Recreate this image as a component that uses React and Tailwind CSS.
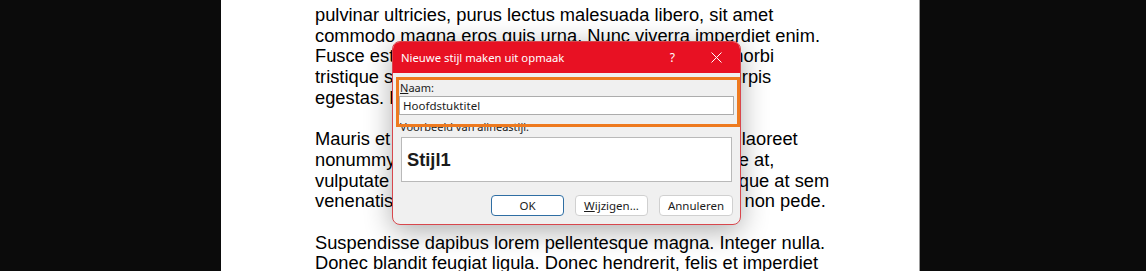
import React from 'react';

const lines = [
  ['pulvinar ultricies, purus lectus malesuada libero, sit amet',
   'commodo magna eros quis urna. Nunc viverra imperdiet enim.',
   'Fusce est. Vivamus a tellus. Pellentesque habitant morbi',
   'tristique senectus et netus et malesuada fames ac turpis',
   'egestas. Proin pharetra nonummy pede.'],
  ['Mauris et orci. Aenean nec lorem. In porttitor. Donec laoreet',
   'nonummy augue. Suspendisse dui purus, scelerisque at,',
   'vulputate vitae, pretium mattis, nunc. Mauris eget neque at sem',
   'venenatis eleifend. Ut nonummy. Fusce aliquet pede non pede.'],
  ['Suspendisse dapibus lorem pellentesque magna. Integer nulla.',
   'Donec blandit feugiat ligula. Donec hendrerit, felis et imperdiet'],
];

const uiFont = "font-['Noto_Sans',sans-serif]";

const Dialog = () => {
  return (
    <div className={`absolute left-[392px] top-[41px] w-[349px] h-[184px] flex flex-col rounded-[8px] overflow-hidden border border-[#d8474d] bg-[#f0f0f0] shadow-[0_6px_28px_rgba(0,0,0,0.32)] ${uiFont} text-[#1b1b1b]`}>
      {/* Title bar */}
      <div className="h-[31px] flex items-center bg-[#e81123] text-white pl-[8px]">
        <span className="text-[11.3px] leading-none">Nieuwe stijl maken uit opmaak</span>
        <span className="ml-auto text-[12px] leading-none mr-[36px]">?</span>
        <svg width="11" height="11" viewBox="0 0 11 11" className="mr-[18px]">
          <path d="M0.5 0.5 L10.5 10.5 M10.5 0.5 L0.5 10.5" stroke="white" strokeWidth="1" />
        </svg>
      </div>

      {/* Body */}
      <div className="flex flex-col px-[6px]">
        <div className="pt-[8px] pl-[1px] text-[11px] leading-[14px]">
          <span className="underline">N</span>aam:
        </div>
        <div className="mt-[1px] h-[19px] bg-white border border-[#acacac] flex items-center pl-[3px] text-[11.5px]">
          Hoofdstuktitel
        </div>
        <div className="mt-[5px] pl-[1px] text-[11px] leading-[14px]">Voorbeeld van alineastijl:</div>
        <div className="mt-[3px] mx-[2px] h-[45px] bg-white border border-[#b9b9b9] flex items-center pl-[5px] font-['Liberation_Sans',Arial,sans-serif] font-bold text-[18.3px]">
          Stijl1
        </div>
        <div className="mt-[13px] flex justify-end gap-[11px] pr-[1px] text-[11.5px]">
          <button className="w-[73px] h-[21px] rounded-[4px] bg-white border border-[#2f6ea3] leading-none">OK</button>
          <button className="w-[73px] h-[21px] rounded-[4px] bg-white border border-[#d0d0d0] leading-none">
            <span className="underline">W</span>ijzigen...
          </button>
          <button className="w-[74px] h-[21px] rounded-[4px] bg-white border border-[#d0d0d0] leading-none">Annuleren</button>
        </div>
      </div>

      {/* Orange highlight */}
      <div className="absolute left-[3px] top-[35px] w-[344px] h-[50px] border-[3px] border-[#ee7a1f]" />
    </div>
  );
};

const App = () => {
  return (
    <div className="relative w-[1146px] h-[271px] overflow-hidden bg-[#0b0b0b]">
      <div className="ml-[221px] w-[699px] h-full bg-white border-r border-[#9c9c9c] pl-[94px] pt-[5px] font-['Liberation_Sans',Arial,sans-serif] text-[18.3px] leading-[20.7px] text-black">
        {lines.map((para, i) => (
          <div key={i} className={i > 0 ? 'mt-[20.7px]' : ''}>
            {para.map((l, j) => (
              <div key={j} className="whitespace-nowrap">{l}</div>
            ))}
          </div>
        ))}
      </div>
      <Dialog />
    </div>
  );
};

export default App;
